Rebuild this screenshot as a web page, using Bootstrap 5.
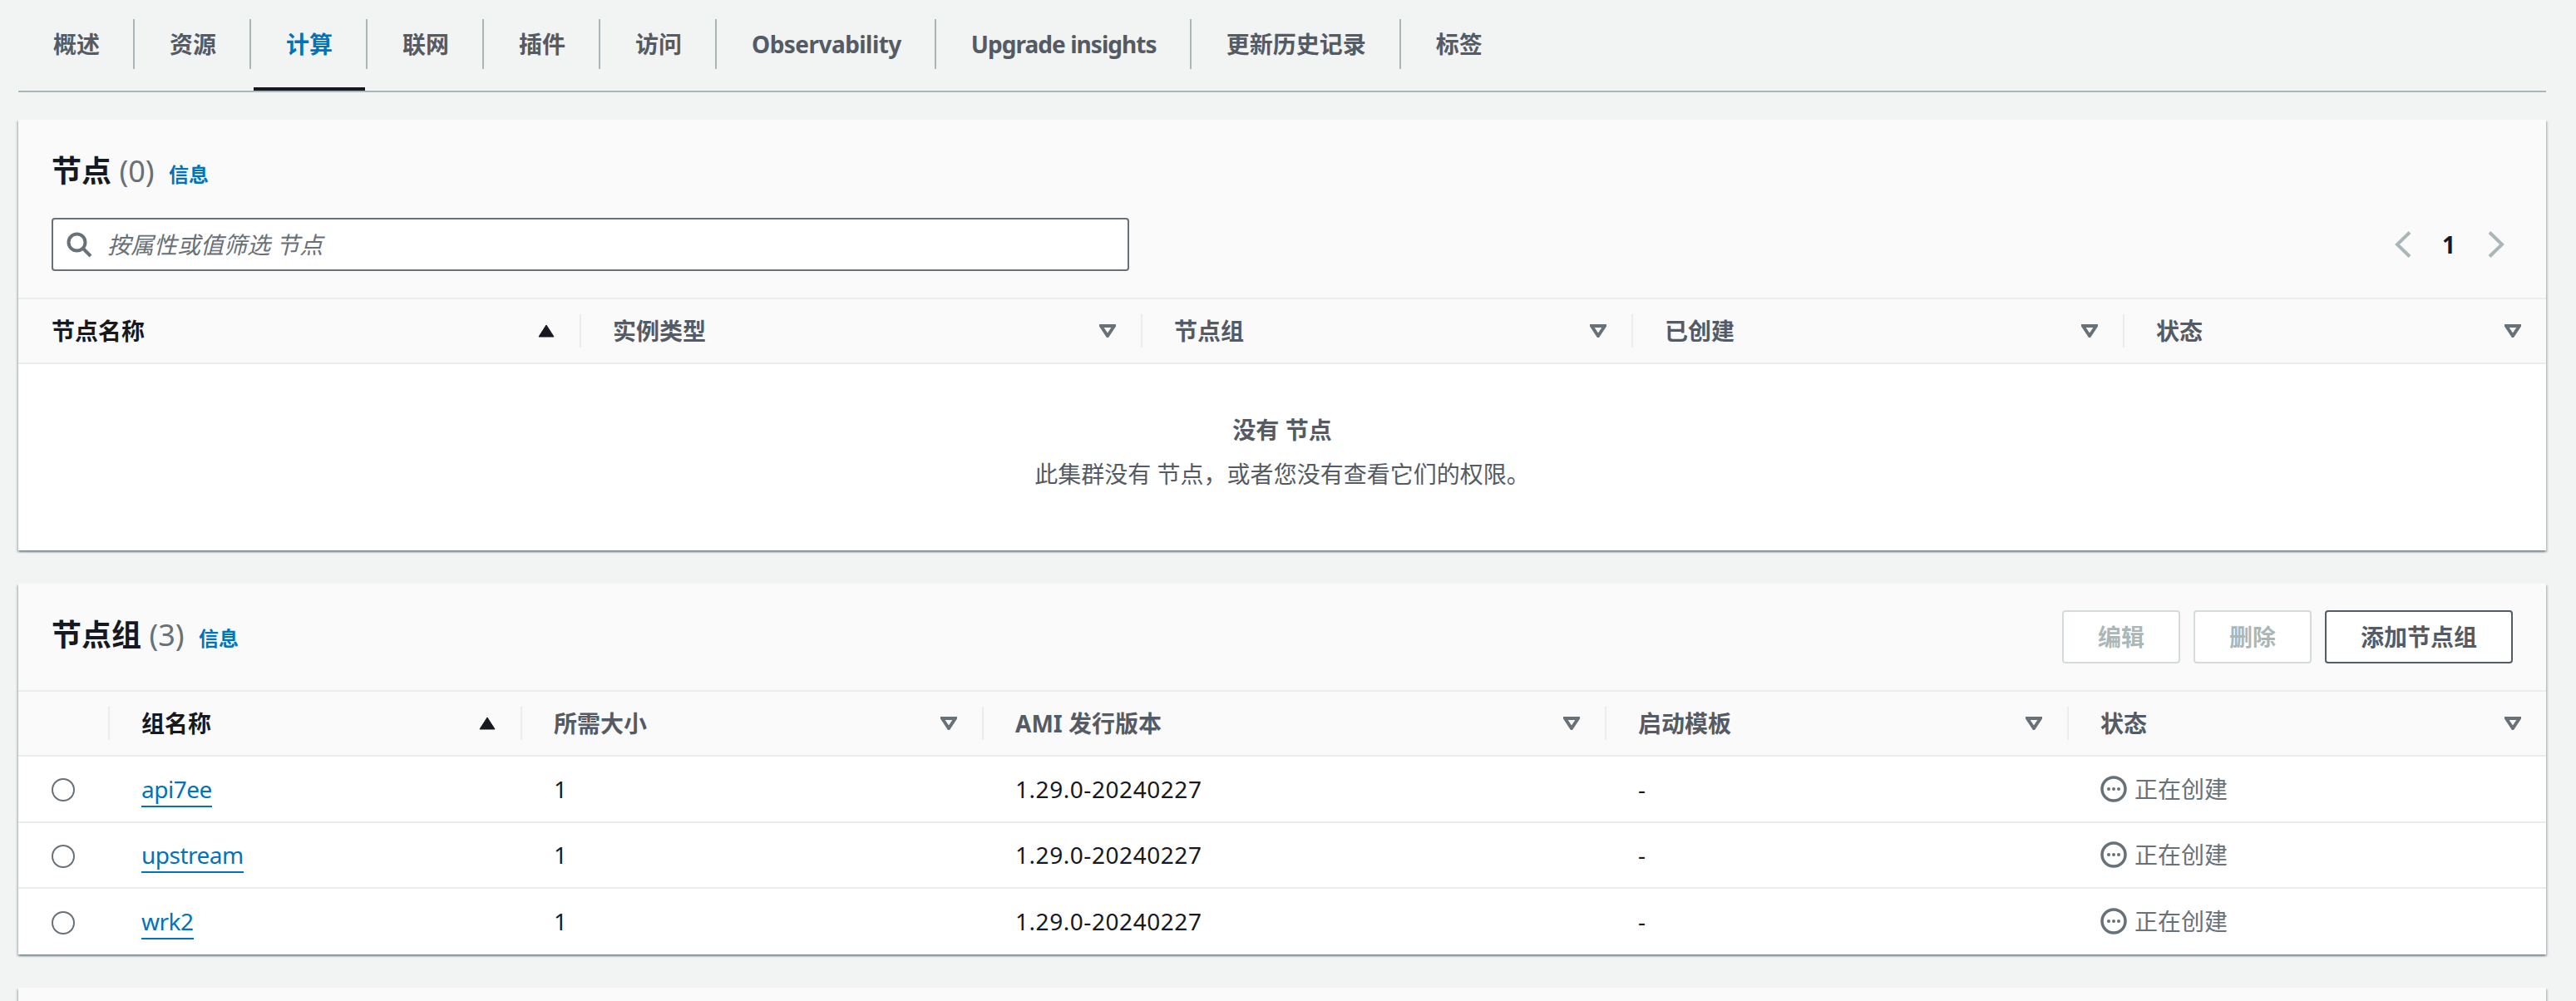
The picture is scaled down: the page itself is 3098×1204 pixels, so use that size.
<!DOCTYPE html>
<html lang="zh-CN">
<head>
  <meta charset="UTF-8">
  <meta name="viewport" content="width=device-width, initial-scale=1.0">
  <title>集群 计算</title>
  <link href="https://cdn.jsdelivr.net/npm/bootstrap@5.3.3/dist/css/bootstrap.min.css" rel="stylesheet">
  <style>
    html, body { height: 1204px; overflow: hidden; }
    body {
      background-color: #f2f3f3;
      color: #16191f;
      font-family: "Noto Sans", "Noto Sans CJK SC", sans-serif;
      font-size: 28px;
      line-height: 40px;
    }
    .page-wrap { padding: 0 36px 0 22px; }

    /* tabs */
    .tab-bar { height: 111px; padding-top: 23px; border-bottom: 2px solid #aab7b8; flex-wrap: nowrap; }
    .tab-link {
      position: relative;
      height: 60px;
      line-height: 60px;
      padding: 0 40px 0 42px;
      color: #545b64;
      font-weight: 700;
      border-right: 2px solid #aab7b8;
    }
    .tab-item:last-child .tab-link { border-right: 0; }
    .tab-link.is-active { color: #0073bb; }
    .tab-link.is-active::after {
      content: "";
      position: absolute;
      left: 3px;
      right: 1px;
      top: 82px;
      height: 4px;
      background: #16191f;
    }
    .tab-obs { letter-spacing: -.55px; }
    .tab-upg { letter-spacing: -.95px; }

    /* panels */
    .panel {
      background: #fafafa;
      border: 0;
      border-radius: 0;
      box-shadow: 0 2px 2px 0 rgba(0,28,36,.3), 2px 2px 2px 0 rgba(0,28,36,.15), -2px 2px 2px 0 rgba(0,28,36,.15);
    }
    .panel-first { margin-top: 33px; }
    .panel-next { margin-top: 40px; }
    .panel-stub { height: 200px; }
    .panel-head { padding: 40px 40px 32px; }
    .panel-head-row { height: 128px; padding: 0 40px; }
    .panel-title { font-size: 36px; line-height: 44px; font-weight: 700; margin: 0; }
    .panel-count { color: #687078; font-weight: 400; }
    .info-link { color: #0073bb; font-size: 24px; font-weight: 700; margin-left: 8px; text-decoration: none; }

    /* filter + pager */
    .filter-row { margin-top: 30px; }
    .filter-box {
      width: 1296px;
      height: 64px;
      background: #fff;
      border: 2px solid #687078;
      border-radius: 4px;
      padding: 0 15px;
      gap: 18px;
      color: #687078;
      font-style: italic;
    }
    .pager { gap: 37px; margin-right: 10px; font-weight: 700; }
    .pager span { margin-right: 2px; }

    /* buttons */
    .act-btn {
      height: 64px;
      padding: 0 41px;
      font-size: 28px;
      line-height: 60px;
      font-weight: 700;
      color: #545b64;
      background: #fff;
      border: 2px solid #545b64;
      border-radius: 4px;
    }
    .act-btn:disabled { color: #aab7b8; background: #fff; border-color: #d5dbdb; opacity: 1; }

    /* tables */
    .data-table { table-layout: fixed; width: 100%; margin: 0; --bs-table-bg: transparent; color: #16191f; font-size: 28px; }
    .data-table > thead > tr > th {
      padding: 0;
      background: #fafafa;
      border-top: 2px solid #eaeded;
      border-bottom: 2px solid #eaeded;
      font-weight: 700;
      color: #545b64;
    }
    .data-table > tbody > tr > td {
      height: 79.500px;
      padding: 0 40px;
      background: #fff;
      vertical-align: middle;
      border-bottom: 2px solid #eaeded;
      color: #16191f;
    }
    .data-table > tbody > tr:last-child > td { border-bottom: 0; }
    .th-inner {
      height: 40px;
      margin: 18px 0;
      padding: 0 30px 0 38px;
      border-left: 2px solid #eaeded;
    }
    th:first-child .th-inner { border-left: 0; padding-left: 40px; }
    .th-inner.is-sorted { color: #16191f; }
    .sort-icon { width: 20px; height: 16px; flex: none; }

    .w-n1 { width: 675px; } .w-n2 { width: 675px; } .w-n3 { width: 590px; } .w-n4 { width: 591px; } .w-n5 { width: 509px; }
    .w-g1 { width: 108px; } .w-g2 { width: 496px; } .w-g3 { width: 555px; } .w-g4 { width: 749px; } .w-g5 { width: 556px; } .w-g6 { width: 576px; }

    .data-table > tbody > tr > td.empty-cell { height: 225px; text-align: center; color: #545b64; padding: 0 0 14px; }
    .empty-title { font-weight: 700; margin-bottom: 13px; }

    .row-radio.form-check-input {
      width: 28px;
      height: 28px;
      margin: 3px 0 0;
      background-color: #fff;
      border: 2px solid #687078;
      display: block;
    }
    .name-link { color: #0073bb; text-decoration: none; border-bottom: 2px solid #0073bb; padding-bottom: 1px; letter-spacing: -.5px; }
    .version-text { letter-spacing: .55px; }
    .state-text { color: #687078; gap: 9px; }
    .state-icon { width: 32px; height: 32px; flex: none; }
  </style>
</head>
<body>
  <div class="page-wrap">
    <ul class="nav tab-bar">
      <li class="nav-item tab-item"><a class="nav-link tab-link" href="#">概述</a></li>
      <li class="nav-item tab-item"><a class="nav-link tab-link" href="#">资源</a></li>
      <li class="nav-item tab-item"><a class="nav-link tab-link is-active" href="#">计算</a></li>
      <li class="nav-item tab-item"><a class="nav-link tab-link" href="#">联网</a></li>
      <li class="nav-item tab-item"><a class="nav-link tab-link" href="#">插件</a></li>
      <li class="nav-item tab-item"><a class="nav-link tab-link" href="#">访问</a></li>
      <li class="nav-item tab-item"><a class="nav-link tab-link tab-obs" href="#">Observability</a></li>
      <li class="nav-item tab-item"><a class="nav-link tab-link tab-upg" href="#">Upgrade insights</a></li>
      <li class="nav-item tab-item"><a class="nav-link tab-link" href="#">更新历史记录</a></li>
      <li class="nav-item tab-item"><a class="nav-link tab-link" href="#">标签</a></li>
    </ul>

    <!-- nodes -->
    <div class="card panel panel-first">
      <div class="panel-head">
        <h2 class="panel-title">节点 <span class="panel-count">(0)</span> <a class="info-link" href="#">信息</a></h2>
        <div class="d-flex justify-content-between align-items-center filter-row">
          <div class="d-flex align-items-center filter-box">
            <svg width="32" height="32" viewBox="0 0 32 32" fill="none" stroke="#687078" stroke-width="4"><circle cx="13.500" cy="13.500" r="10"/><path d="M21 21l9 9"/></svg>
            <span>按属性或值筛选 节点</span>
          </div>
          <div class="d-flex align-items-center pager">
            <svg width="20" height="32" viewBox="0 0 20 32" fill="none" stroke="#aab7b8" stroke-width="4"><path d="M18 1.500L3 16l15 14.500"/></svg>
            <span>1</span>
            <svg width="20" height="32" viewBox="0 0 20 32" fill="none" stroke="#aab7b8" stroke-width="4"><path d="M2 1.500L17 16 2 30.500"/></svg>
          </div>
        </div>
      </div>
      <table class="table data-table">
        <colgroup><col class="w-n1"><col class="w-n2"><col class="w-n3"><col class="w-n4"><col class="w-n5"></colgroup>
        <thead>
          <tr>
            <th><div class="d-flex justify-content-between align-items-center th-inner is-sorted">节点名称<svg class="sort-icon" viewBox="0 0 20 16"><path d="M10 1l9 14H1z" fill="#16191f" stroke="#16191f" stroke-linejoin="round"/></svg></div></th>
            <th><div class="d-flex justify-content-between align-items-center th-inner">实例类型<svg class="sort-icon" viewBox="0 0 20 16"><path d="M2 2h16l-8 12z" fill="none" stroke="#687078" stroke-width="4"/></svg></div></th>
            <th><div class="d-flex justify-content-between align-items-center th-inner">节点组<svg class="sort-icon" viewBox="0 0 20 16"><path d="M2 2h16l-8 12z" fill="none" stroke="#687078" stroke-width="4"/></svg></div></th>
            <th><div class="d-flex justify-content-between align-items-center th-inner">已创建<svg class="sort-icon" viewBox="0 0 20 16"><path d="M2 2h16l-8 12z" fill="none" stroke="#687078" stroke-width="4"/></svg></div></th>
            <th><div class="d-flex justify-content-between align-items-center th-inner">状态<svg class="sort-icon" viewBox="0 0 20 16"><path d="M2 2h16l-8 12z" fill="none" stroke="#687078" stroke-width="4"/></svg></div></th>
          </tr>
        </thead>
        <tbody>
          <tr>
            <td colspan="5" class="empty-cell">
              <div class="empty-title">没有 节点</div>
              <div>此集群没有 节点，或者您没有查看它们的权限。</div>
            </td>
          </tr>
        </tbody>
      </table>
    </div>

    <!-- node groups -->
    <div class="card panel panel-next">
      <div class="d-flex justify-content-between align-items-center panel-head-row">
        <h2 class="panel-title">节点组 <span class="panel-count">(3)</span> <a class="info-link" href="#">信息</a></h2>
        <div class="d-flex gap-3">
          <button class="btn act-btn" disabled>编辑</button>
          <button class="btn act-btn" disabled>删除</button>
          <button class="btn act-btn">添加节点组</button>
        </div>
      </div>
      <table class="table data-table">
        <colgroup><col class="w-g1"><col class="w-g2"><col class="w-g3"><col class="w-g4"><col class="w-g5"><col class="w-g6"></colgroup>
        <thead>
          <tr>
            <th><div class="th-inner"></div></th>
            <th><div class="d-flex justify-content-between align-items-center th-inner is-sorted">组名称<svg class="sort-icon" viewBox="0 0 20 16"><path d="M10 1l9 14H1z" fill="#16191f" stroke="#16191f" stroke-linejoin="round"/></svg></div></th>
            <th><div class="d-flex justify-content-between align-items-center th-inner">所需大小<svg class="sort-icon" viewBox="0 0 20 16"><path d="M2 2h16l-8 12z" fill="none" stroke="#687078" stroke-width="4"/></svg></div></th>
            <th><div class="d-flex justify-content-between align-items-center th-inner">AMI 发行版本<svg class="sort-icon" viewBox="0 0 20 16"><path d="M2 2h16l-8 12z" fill="none" stroke="#687078" stroke-width="4"/></svg></div></th>
            <th><div class="d-flex justify-content-between align-items-center th-inner">启动模板<svg class="sort-icon" viewBox="0 0 20 16"><path d="M2 2h16l-8 12z" fill="none" stroke="#687078" stroke-width="4"/></svg></div></th>
            <th><div class="d-flex justify-content-between align-items-center th-inner">状态<svg class="sort-icon" viewBox="0 0 20 16"><path d="M2 2h16l-8 12z" fill="none" stroke="#687078" stroke-width="4"/></svg></div></th>
          </tr>
        </thead>
        <tbody id="group-rows"></tbody>
      </table>
    </div>

    <div class="card panel panel-next panel-stub"></div>
  </div>

  <script src="https://cdn.jsdelivr.net/npm/bootstrap@5.3.3/dist/js/bootstrap.bundle.min.js"></script>
  <script>
    const groups = ['api7ee', 'upstream', 'wrk2'];
    const rows = document.getElementById('group-rows');

    groups.forEach((name) => {
      rows.insertAdjacentHTML('beforeend', `
        <tr>
          <td><input class="form-check-input row-radio" type="radio" name="group"></td>
          <td><a class="name-link" href="#">${name}</a></td>
          <td>1</td>
          <td class="version-text">1.29.0-20240227</td>
          <td>-</td>
          <td>
            <div class="d-flex align-items-center state-text">
              <svg class="state-icon" viewBox="0 0 32 32"><circle cx="16" cy="16" r="14" fill="none" stroke="#687078" stroke-width="3.500"/><circle cx="10" cy="16" r="2" fill="#687078"/><circle cx="16" cy="16" r="2" fill="#687078"/><circle cx="22" cy="16" r="2" fill="#687078"/></svg>
              <span>正在创建</span>
            </div>
          </td>
        </tr>`);
    });
  </script>
</body>
</html>
